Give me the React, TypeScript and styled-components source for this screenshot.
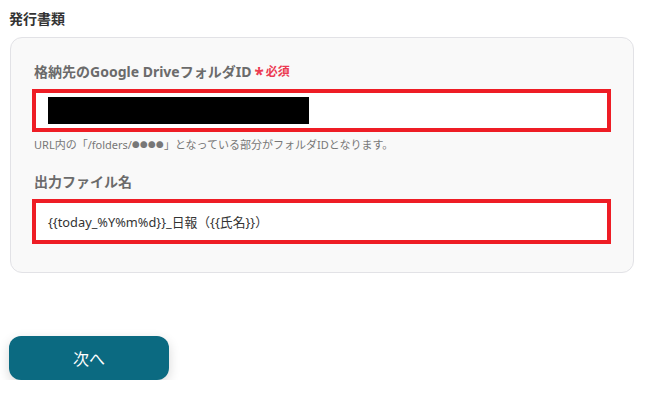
import React from "react";
import styled, { createGlobalStyle } from "styled-components";

const GlobalStyle = createGlobalStyle`
    html, body {
        margin: 0;
        padding: 0;
        background: #ffffff;
    }
    body {
        font-family: "Noto Sans", "Noto Sans CJK JP", sans-serif;
        color: #333333;
    }
`;

const Page = styled.div`
    display: flex;
    flex-direction: column;
    align-items: flex-start;
    padding: 9px 16px 0 9px;
    width: 650px;
    box-sizing: border-box;
`;

const SectionTitle = styled.h2`
    margin: 0 0 8px 0;
    font-size: 14px;
    line-height: 20px;
    font-weight: 700;
    color: #333333;
`;

const Card = styled.div`
    display: flex;
    flex-direction: column;
    box-sizing: border-box;
    width: 624px;
    margin-left: 1px;
    padding: 24px 22px 28px 21px;
    background: #f9f9f9;
    border: 1px solid #e2e2e6;
    border-radius: 12px;
`;

const Field = styled.div<{ gap?: number }>`
    display: flex;
    flex-direction: column;
    margin-top: ${({ gap }) => gap ?? 0}px;
`;

const Label = styled.label`
    display: flex;
    align-items: center;
    padding-left: 2px;
    font-size: 14px;
    line-height: 20px;
    font-weight: 700;
    color: #6b6b6b;
`;

const Required = styled.span`
    display: inline-flex;
    align-items: center;
    margin-left: 3px;
    color: #ec3a51;
    font-size: 12px;
    font-weight: 700;
`;

const Star = styled.span`
    font-size: 17px;
    line-height: 1;
    margin-right: 2px;
    position: relative;
    top: 2px;
`;

const InputBox = styled.div<{ h: number }>`
    display: flex;
    align-items: center;
    box-sizing: border-box;
    height: ${({ h }) => h}px;
    margin-top: 7px;
    padding: 0 12px;
    background: #ffffff;
    border: 4px solid #ee1d25;
    font-size: 12.8px;
    color: #333333;
`;

const Redacted = styled.div`
    width: 261px;
    height: 27px;
    background: #000000;
`;

const Help = styled.p`
    margin: 5px 0 0 2px;
    font-size: 11px;
    line-height: 16px;
    color: #777777;
`;

const Dots = styled.span`
    font-size: 7.5px;
    letter-spacing: 0.5px;
    vertical-align: 1px;
`;

const NextButton = styled.button`
    margin-top: 63px;
    width: 160px;
    height: 44px;
    border: none;
    border-radius: 12px;
    background: #0b6a81;
    color: #ffffff;
    font-family: inherit;
    font-size: 16px;
    box-shadow: 0 4px 12px rgba(0, 0, 0, 0.16);
    cursor: pointer;
`;

export default function App() {
    return (
        <>
            <GlobalStyle />
            <Page>
                <SectionTitle>発行書類</SectionTitle>
                <Card>
                    <Field>
                        <Label>
                            格納先のGoogle DriveフォルダID
                            <Required>
                                <Star>*</Star>必須
                            </Required>
                        </Label>
                        <InputBox h={43}>
                            <Redacted />
                        </InputBox>
                        <Help>
                            URL内の「/folders/<Dots>●●●●</Dots>」となっている部分がフォルダIDとなります。
                        </Help>
                    </Field>
                    <Field gap={19}>
                        <Label>出力ファイル名</Label>
                        <InputBox h={45}>{"{{today_%Y%m%d}}_日報（{{氏名}}）"}</InputBox>
                    </Field>
                </Card>
                <NextButton>次へ</NextButton>
            </Page>
        </>
    );
}
